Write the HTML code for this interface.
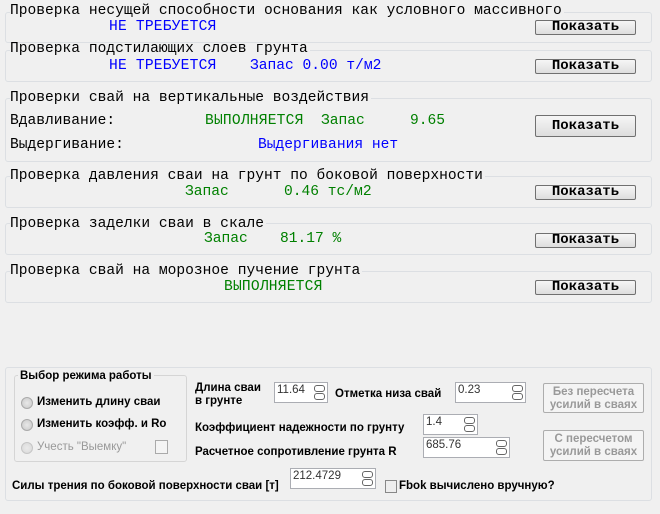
<!DOCTYPE html>
<html><head><meta charset="utf-8"><style>
body{margin:0;width:660px;height:514px;background:#f0f0f0;position:relative;overflow:hidden;font-family:"Liberation Mono",monospace;font-size:14.6px;color:#000}
.a{position:absolute;white-space:nowrap;line-height:13px}
.box{position:absolute;left:5px;width:645px;border:1px solid #dcdfe3;border-radius:3px}
.t{position:absolute;background:#f0f0f0;left:10px;white-space:nowrap;line-height:13px;padding-right:2px}
.btn{position:absolute;left:535px;width:99px;border:1px solid #707070;border-radius:2px;background:linear-gradient(#f6f6f6,#dddddd);text-align:center;font-weight:bold;font-size:14px;line-height:13px}
.b{color:#0000ff}.g{color:#008000}
.u{font-size:14.6px;letter-spacing:0.2px}
.s{font-family:"Liberation Sans Narrow","Liberation Sans",sans-serif;font-weight:bold;font-size:11.5px}
.inp{position:absolute;background:#fff;border:1px solid #abadb3;height:21px;font-family:"Liberation Sans Narrow",sans-serif;font-size:11.5px;line-height:15px;padding-left:2px;box-sizing:border-box;color:#333}
.sp{position:absolute;right:2px;top:2px;width:11px;height:14px}
.sp i{display:block;height:5px;border:1px solid #666;border-radius:3px;margin-bottom:1px}
.rb{position:absolute;width:10px;height:10px;border:1px solid #aaa;border-radius:50%;background:radial-gradient(#e8e8e8,#c8c8c8)}
.gb{position:absolute;border:1px solid #adadad;border-radius:2px;background:#f4f4f4;color:#999;text-align:center;font-family:"Liberation Sans Narrow",sans-serif;font-weight:bold;font-size:11.5px;line-height:13px}
</style></head><body>
<div class="box" style="top:12px;height:29px"></div><div class="t" style="top:5px">Проверка несущей способности основания как условного массивного</div>
<div class="a b u" style="left:109px;top:21px">НЕ ТРЕБУЕТСЯ</div><div class="btn" style="top:20px;height:13px">Показать</div>

<div class="box" style="top:50px;height:30px"></div><div class="t" style="top:43px">Проверка подстилающих слоев грунта</div>
<div class="a b u" style="left:109px;top:60px">НЕ ТРЕБУЕТСЯ</div><div class="a b" style="left:250px;top:60px">Запас 0.00 т/м2</div><div class="btn" style="top:59px;height:13px">Показать</div>

<div class="box" style="top:98px;height:62px"></div><div class="t" style="top:92px">Проверки свай на вертикальные воздействия</div>
<div class="a" style="left:10px;top:115px">Вдавливание:</div>
<div class="a g u" style="left:205px;top:115px">ВЫПОЛНЯЕТСЯ</div><div class="a g" style="left:321px;top:115px">Запас</div><div class="a g" style="left:410px;top:115px">9.65</div>
<div class="a" style="left:10px;top:139px">Выдергивание:</div><div class="a b" style="left:258px;top:139px">Выдергивания нет</div>
<div class="btn" style="top:115px;height:20px;line-height:20px">Показать</div>

<div class="box" style="top:176px;height:30px"></div><div class="t" style="top:170px">Проверка давления сваи на грунт по боковой поверхности</div>
<div class="a g" style="left:185px;top:186px">Запас</div><div class="a g" style="left:284px;top:186px">0.46 тс/м2</div><div class="btn" style="top:185px;height:13px">Показать</div>

<div class="box" style="top:223px;height:30px"></div><div class="t" style="top:218px">Проверка заделки сваи в скале</div>
<div class="a g" style="left:204px;top:233px">Запас</div><div class="a g" style="left:280px;top:233px">81.17 %</div><div class="btn" style="top:233px;height:13px">Показать</div>

<div class="box" style="top:271px;height:30px"></div><div class="t" style="top:265px">Проверка свай на морозное пучение грунта</div>
<div class="a g u" style="left:224px;top:281px">ВЫПОЛНЯЕТСЯ</div><div class="btn" style="top:280px;height:13px">Показать</div>

<div class="box" style="top:367px;height:132px"></div>
<div style="position:absolute;left:14px;top:375px;width:171px;height:85px;border:1px solid #d5d5d5;border-radius:3px"></div>
<div class="a s" style="left:18px;top:370px;background:#f0f0f0;padding:0 2px">Выбор режима работы</div>
<div class="rb" style="left:21px;top:397px"></div><div class="a s" style="left:37px;top:396px">Изменить длину сваи</div>
<div class="rb" style="left:21px;top:419px"></div><div class="a s" style="left:37px;top:418px">Изменить коэфф. и Ro</div>
<div class="rb" style="left:21px;top:442px;opacity:.6"></div><div class="a s" style="left:37px;top:441px;color:#999;font-weight:normal">Учесть "Выемку"</div>
<div style="position:absolute;left:155px;top:440px;width:11px;height:12px;border:1px solid #aaa;background:#f4f4f4"></div>

<div class="a s" style="left:195px;top:382px;line-height:13px">Длина сваи<br>в грунте</div>
<div class="inp" style="left:274px;top:382px;width:54px">11.64<div class="sp"><i></i><i></i></div></div>
<div class="a s" style="left:335px;top:388px">Отметка низа свай</div>
<div class="inp" style="left:455px;top:382px;width:71px">0.23<div class="sp"><i></i><i></i></div></div>
<div class="gb" style="left:543px;top:383px;width:101px;height:30px;padding-top:2px;box-sizing:border-box">Без пересчета<br>усилий в сваях</div>
<div class="a s" style="left:195px;top:422px">Коэффициент надежности по грунту</div>
<div class="inp" style="left:423px;top:414px;width:55px">1.4<div class="sp"><i></i><i></i></div></div>
<div class="a s" style="left:195px;top:446px">Расчетное сопротивление грунта R</div>
<div class="inp" style="left:423px;top:437px;width:87px">685.76<div class="sp"><i></i><i></i></div></div>
<div class="gb" style="left:543px;top:430px;width:101px;height:31px;padding-top:2px;box-sizing:border-box">С пересчетом<br>усилий в сваях</div>
<div class="a s" style="left:12px;top:480px">Силы трения по боковой поверхности сваи [т]</div>
<div class="inp" style="left:290px;top:468px;width:86px">212.4729<div class="sp"><i></i><i></i></div></div>
<div style="position:absolute;left:385px;top:480px;width:10px;height:11px;border:1px solid #888;background:#eee"></div>
<div class="a s" style="left:399px;top:480px">Fbok вычислено вручную?</div>
</body></html>
